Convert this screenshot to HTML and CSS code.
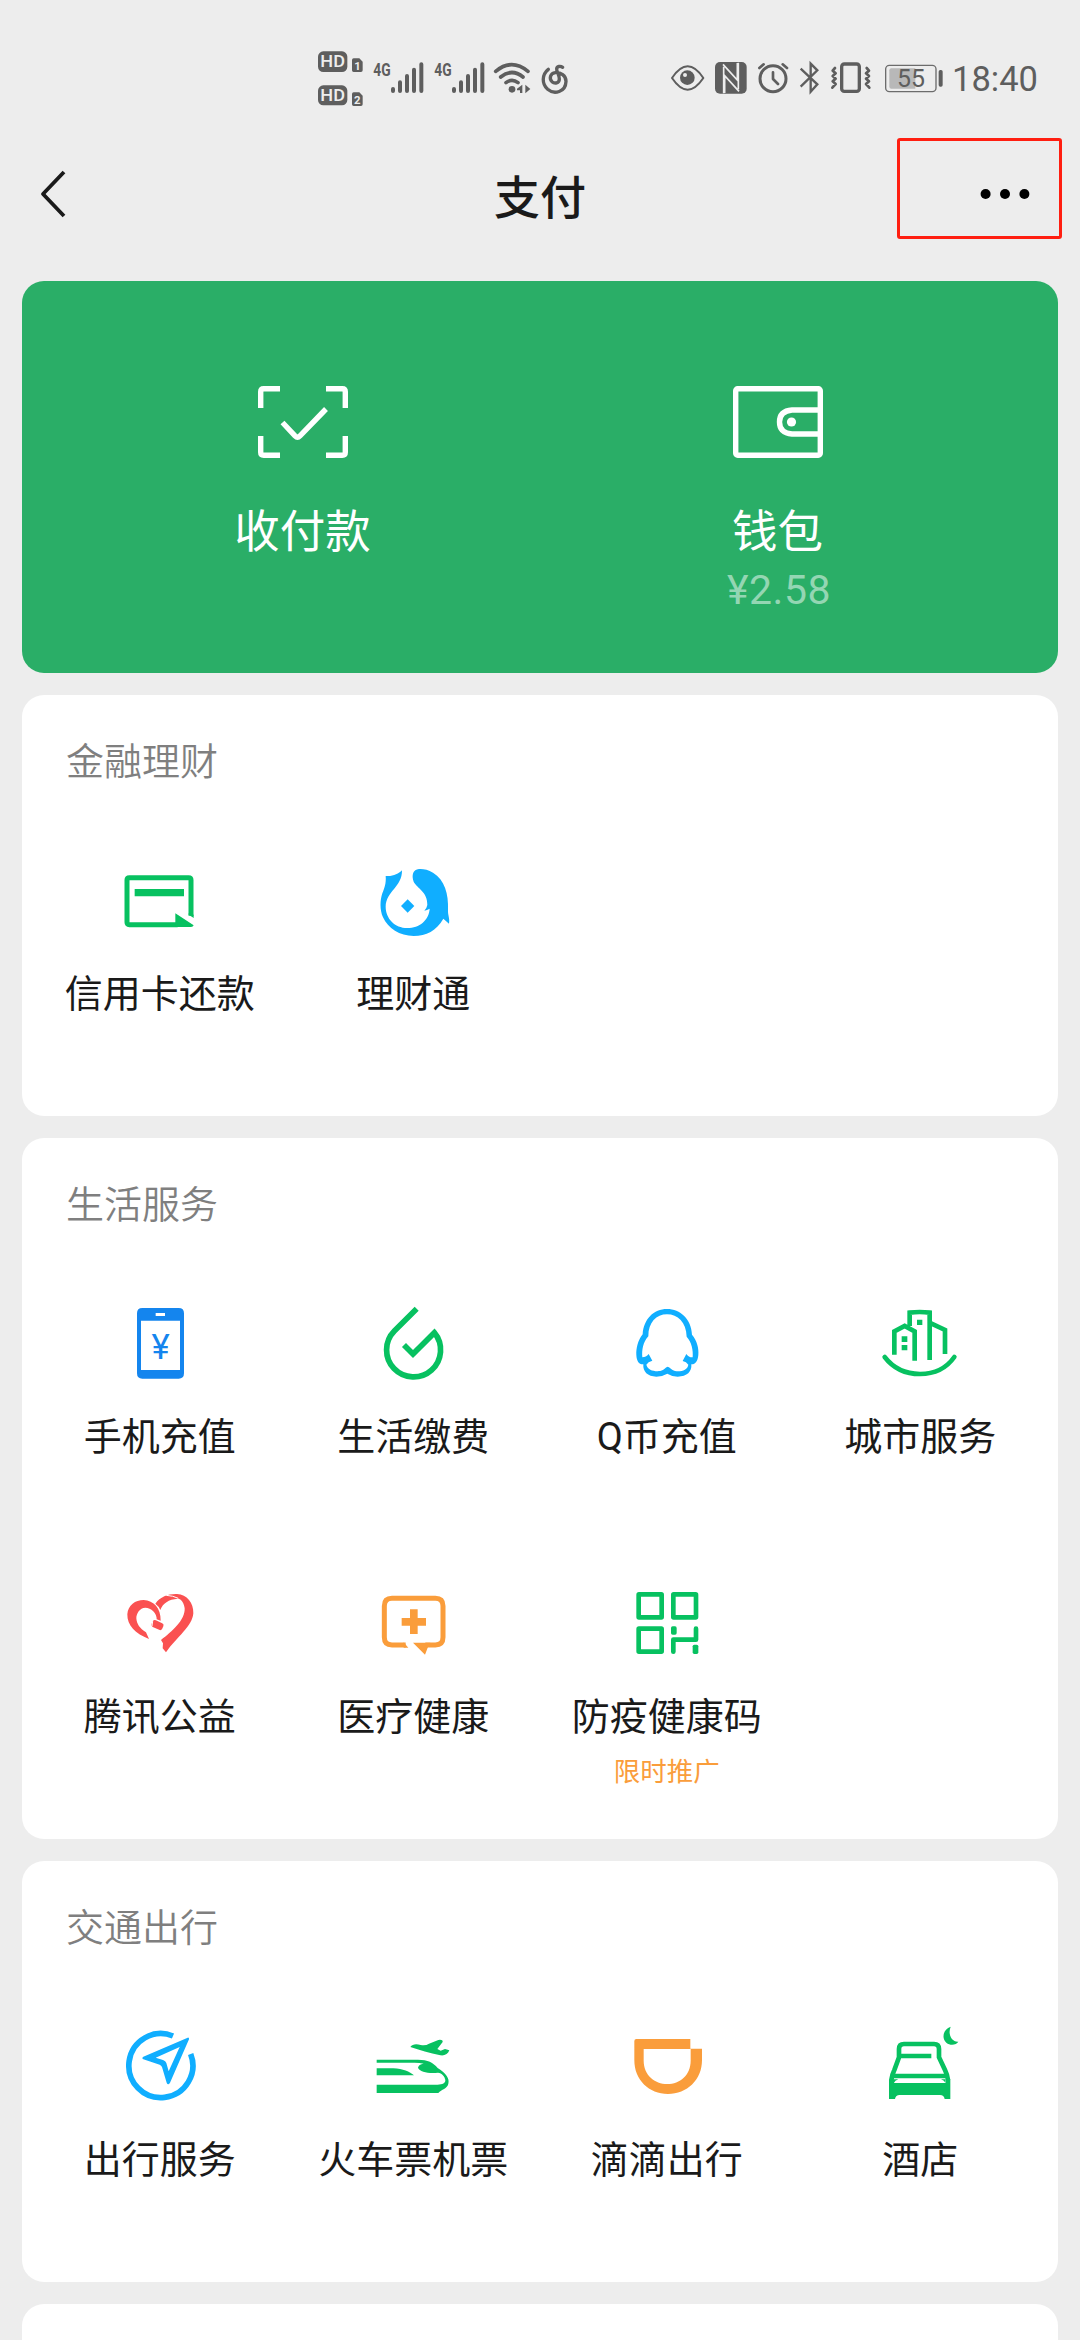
FILE: index.html
```html
<!DOCTYPE html>
<html lang="zh-CN">
<head>
<meta charset="utf-8">
<title>支付</title>
<link rel="stylesheet" href="styles.css">
</head>
<body>
<div class="status">
  <svg class="status-left" viewBox="0 0 870 270">
    <g class="fill">
      <rect x="54" y="64" width="88" height="62" rx="16"/>
      <rect x="54" y="166" width="88" height="60" rx="16"/>
      <path d="M156 90q0-5 5-5h17l10 10v26q0 5-5 5h-22q-5 0-5-5zM156 192q0-5 5-5h17l10 10v26q0 5-5 5h-22q-5 0-5-5z"/>
      <circle cx="636" cy="178" r="10"/>
      <path d="M667 164v25h-7v-8h-9v-5zM676 164l15 13-15 13z"/>
    </g>
    <text class="hd" x="61" y="112" textLength="74" lengthAdjust="spacingAndGlyphs">HD</text>
    <text class="hd" x="61" y="213" textLength="74" lengthAdjust="spacingAndGlyphs">HD</text>
    <text class="sim" x="163" y="121">1</text>
    <text class="sim" x="162" y="223">2</text>
    <text class="net" x="220" y="139" textLength="52" lengthAdjust="spacingAndGlyphs">4G</text>
    <text class="net" x="403" y="139" textLength="52" lengthAdjust="spacingAndGlyphs">4G</text>
    <path class="line w12" d="M279 177v6M300 157v26M321 138v45M342 119v64M364 103v80M462 177v6M483 157v26M504 138v45M525 119v64M547 103v80"/>
    <path class="line w11" d="M587 124q48-40 97 0M602 141q34-27 67 0M618 158q18-14 36 0"/>
    <path class="line w10" d="M745 118c-20 16-20 44-2 60 20 17 54 8 55-24 0-18-16-27-32-26-16 2-19 18-10 27 8 7 22 5 22-8 0-13-9-22-8-31 1-7 11-9 18-4"/>
  </svg>
  <svg class="status-right" viewBox="0 0 900 240">
    <path class="line w6" d="M66 114q47-70 94 0q-47 70-94 0z"/>
    <circle class="fill" cx="112" cy="113" r="22"/>
    <circle class="dot-bg" cx="105" cy="105" r="6"/>
    <rect class="fill" x="195" y="66" width="95" height="95" rx="15"/>
    <path class="cut" d="M221 160V80M219 73l43 47V69M265 68V148M267 154l-43-47v52"/>
    <circle class="line w9" cx="369" cy="116" r="39"/>
    <path class="line w8" d="M369 97v20l15 15M328 84l13-11M398 73l13 11"/>
    <path class="line w7 sharp" d="M452 86l50 47-20 22V71l20 20-50 49"/>
    <rect class="line w10" x="575" y="72" width="53" height="82" rx="8"/>
    <path class="line w8" d="M555 84l-7 8 9 8-9 8 9 8-9 8 9 8-10 11M650 84l7 8-9 8 9 8-9 8 9 8-9 8 10 11"/>
    <rect class="battery" x="707" y="76" width="151" height="79" rx="11"/>
    <path class="charge" d="M718 91q0-6 6-6h72v61h-72q-6 0-6-6z"/>
    <rect class="fill" x="866" y="90" width="12" height="50" rx="5"/>
    <text class="level" x="741" y="140" textLength="84" lengthAdjust="spacingAndGlyphs">55</text>
  </svg>
  <span class="clock">18:40</span>
</div>
<header class="nav">
  <svg class="back" viewBox="0 0 26 50"><path d="M24 3L3 25l21 22"/></svg>
  <h1 class="nav-title">支付</h1>
  <svg class="more" viewBox="0 0 50 12"><circle cx="5.6" cy="6" r="5"/><circle cx="25" cy="6" r="5"/><circle cx="44.4" cy="6" r="5"/></svg>
  <div class="marker"></div>
</header>
<main class="cards">
  <section class="hero">
    <div class="hero-item">
      <svg class="hero-icon" viewBox="0 0 90 72"><path d="M22 2.7H5.7q-3 0-3 3V22M68 2.7h16.300q3 0 3 3V22M22 69.300H5.700q-3 0-3-3V50M68 69.300h16.300q3 0 3-3V50"/><path d="M24.500 36.500L37 49.800q2.500 2.500 5 0L68 23"/></svg>
      <span class="hero-label">收付款</span>
    </div>
    <div class="hero-item">
      <svg class="hero-icon" viewBox="0 0 90 72"><rect x="2.700" y="2.700" width="84.600" height="66.600" rx="2"/><path d="M86 24H59q-12.500 1-12.500 12T59 48h27"/><circle class="solid" cx="58.500" cy="36" r="4.600"/></svg>
      <span class="hero-label">钱包</span>
      <span class="balance">¥2.58</span>
    </div>
  </section>

  <section class="card">
    <h2 class="card-title">金融理财</h2>
    <div class="grid">
      <div class="item green">
        <svg class="icon" viewBox="239 543 240 240"><path class="s15" d="M452 707V600q0-7-7-7H267q-7 0-7 7v127q0 7 7 7h145"/><path d="M405 700l55 36q-2 5-8 5h-47zM283 627h148v22H283zM445 700l15 4v10l-15-10z"/></svg>
        <span class="label">信用卡还款</span>
      </div>
      <div class="item blue">
        <svg class="icon" viewBox="1000 543 240 240"><path d="M1087 571C1076 582 1060 590 1038 588C1040 610 1034 625 1028 640C1021 660 1020 690 1030 712C1045 745 1080 768 1122 768C1160 768 1190 752 1211 716L1228 731C1231 715 1224 705 1225 690C1227 640 1215 600 1180 578C1165 569 1150 566 1138 567C1120 569 1115 585 1122 605C1132 625 1164 635 1163 675Q1161 686 1154 692Q1162 691 1170 686C1168 720 1140 744 1103 744C1065 744 1038 715 1038 680C1039 635 1088 620 1087 571z"/><path d="M1104 658l20 20-20 20-20-20z"/></svg>
        <span class="label">理财通</span>
      </div>
    </div>
  </section>

  <section class="card">
    <h2 class="card-title">生活服务</h2>
    <div class="grid">
      <div class="item azure">
        <svg class="icon" viewBox="179 102 240 240"><path fill-rule="evenodd" d="M246 114h109q16 0 16 16v180q0 16-16 16H246q-16 0-16-16V130q0-16 16-16zM242 152v148h117V152zM286 129v9h28v-9z"/><text class="yen" x="300.500" y="267">¥</text></svg>
        <span class="label">手机充值</span>
      </div>
      <div class="item green">
        <svg class="icon" viewBox="940 102 240 240"><path class="s17" d="M1071 116L1004 183A81 81 0 1 0 1124 188L1060 252L1033 225"/></svg>
        <span class="label">生活缴费</span>
      </div>
      <div class="item blue">
        <svg class="icon" viewBox="200 102 240 240"><path fill-rule="evenodd" d="M320 117C360 117 393 147 395 194C410 212 416 235 414 255C412 275 404 284 393 283C395 305 380 320 352 320Q333 319 321 311Q308 319 288 320C262 320 247 305 249 283C236 284 229 274 228 255C227 235 233 210 247 193C250 147 280 117 320 117zM320 133C288 133 264 157 264 199C248 217 244 240 246 262Q257 262 265 252L276 272Q263 275 258 284C262 300 280 305 300 303C312 300 318 290 322 290C326 290 334 300 344 303C362 306 382 300 384 284Q378 275 367 273L378 252Q386 263 397 262C399 240 394 217 379 200C378 157 352 133 320 133z"/></svg>
        <span class="label">Q币充值</span>
      </div>
      <div class="item green">
        <svg class="icon" viewBox="961 102 240 240"><path class="s14 round" d="M975 261Q1014 312 1081 312T1184 261"/><path class="s14" d="M1004 254V184L1035 168L1065 184V272M1050 168V128Q1080 124 1110 128V270M1114 160L1156 180V252"/><path d="M1026 199h17v17h-17zM1026 225h17v16h-17zM1072 149h16v16h-16z"/></svg>
        <span class="label">城市服务</span>
      </div>
      <div class="item red">
        <svg class="icon" viewBox="179 72 240 240"><path d="M266 237C225 222 200 195 201 163C203 135 225 120 250 120C280 121 302 145 301 182L289 178C290 160 272 143 255 143C238 144 228 160 228 175C229 192 238 205 257 217z"/><path d="M285 131C300 110 325 101 350 102C380 104 400 128 399 160C396 200 350 230 317 277L307 265L308 250L302 240C335 215 375 180 373 145C372 130 362 115 352 116C325 118 307 130 300 150Q295 138 285 131z"/><rect x="274" y="184" width="35" height="22" rx="7" transform="rotate(25 291 195)"/><path class="seam" d="M318 106q20 1 36 9M277 184l-2 14"/></svg>
        <span class="label">腾讯公益</span>
      </div>
      <div class="item orange">
        <svg class="icon" viewBox="940 72 240 240"><path class="s15" d="M1038 255H997q-23 0-23-23V138q0-23 23-23h130q23 0 23 23v94q0 23-23 23h-30"/><path d="M1032 247l14 16h-14zM1060 248h52l-8 15-8 21zM1051 148h23v26h25v23h-25v25h-23v-25h-25v-23h25z"/></svg>
        <span class="label">医疗健康</span>
      </div>
      <div class="item green">
        <svg class="icon" viewBox="200 72 240 240"><g class="s14"><rect x="235" y="103" width="69" height="69" rx="1"/><rect x="339" y="103" width="68" height="69" rx="1"/><rect x="235" y="206" width="69" height="69" rx="1"/></g><path class="s14 round" d="M407 206V239H339V275"/><rect x="332" y="199" width="17" height="25" rx="5"/><rect x="397" y="254" width="17" height="28" rx="5"/></svg>
        <span class="label">防疫健康码</span>
        <span class="promo">限时推广</span>
      </div>
    </div>
  </section>

  <section class="card">
    <h2 class="card-title">交通出行</h2>
    <div class="grid">
      <div class="item blue">
        <svg class="icon" viewBox="179 81 240 240"><path class="s17" d="M338 108A96 96 0 1 0 391 162"/><path fill-rule="evenodd" d="M382 113Q387 112 386 118L329 248Q323 257 319 248L305 201Q303 196 298 194L249 178Q243 174 249 170zM358 141L286 173L308 180Q316 183 318 189L325 214z"/></svg>
        <span class="label">出行服务</span>
      </div>
      <div class="item green">
        <svg class="icon" viewBox="940 81 240 240"><path d="M951 179H1075C1105 179 1120 187 1134 204C1160 220 1170 236 1166 251C1163 266 1145 268 1136 279H951V254H1130C1147 255 1158 249 1157 240C1155 228 1147 220 1135 218C1110 222 1080 216 1075 203Q1077 192 1092 191Q1080 188 1065 188H951z"/><path d="M951 205h50C1030 206 1050 215 1063 226H951zM1052 141C1058 132 1070 131 1083 135Q1098 138 1108 131L1136 120Q1150 118 1149 126L1133 147L1143 152L1156 147L1169 151C1165 162 1155 168 1142 166C1110 160 1080 150 1052 141z"/></svg>
        <span class="label">火车票机票</span>
      </div>
      <div class="item orange">
        <svg class="icon" viewBox="200 81 240 240"><path fill-rule="evenodd" d="M222 123q0-6 6-6h162v29h35v35C425 240 380 282 323 282S222 240 222 181zM250 147v35C250 225 283 252 321 252S391 225 391 182V147z"/></svg>
        <span class="label">滴滴出行</span>
      </div>
      <div class="item green">
        <svg class="icon" viewBox="961 81 240 240"><path class="s14" d="M995 240Q997 224 1004 210L1018 172V147Q1018 132 1033 132H1123Q1138 132 1138 147V172L1156 210Q1163 224 1165 240M1022 168H1115M1002 228H1158"/><path d="M988 238h15v11h154v-11h15v59h-17q-2-12-14-12H1020q-12 0-14 12h-18zM1002 250v-12h14q-10 3-14 12zM1158 250v-12h-14q10 3 14 12zM1173 80C1150 88 1145 115 1160 128C1172 138 1190 135 1196 125C1178 127 1163 105 1173 80z"/></svg>
        <span class="label">酒店</span>
      </div>
    </div>
  </section>
  <section class="card card-next"></section>
</main>
</body>
</html>
```
FILE: styles.css
```css
* { box-sizing: border-box; }
body {
  margin: 0;
  width: 1080px;
  height: 2340px;
  overflow: hidden;
  background: #ededed;
  color: #1a1a1a;
  font-family: Roboto, "Noto Sans CJK SC", sans-serif;
}
h1, h2 { margin: 0; font-weight: 400; }
svg { display: block; flex: none; }

/* status bar */
.status { display: flex; height: 130px; padding: 30px 44px 0 300px; color: #5e5e5e; }
.status-left { width: 290px; height: 90px; }
.status-right { width: 300px; height: 80px; margin: 10px 0 0 60px; }
.clock { margin: 29px 0 0 2px; font-size: 34.5px; line-height: 40px; white-space: nowrap; }
.fill { fill: #5e5e5e; }
.line { fill: none; stroke: #5e5e5e; stroke-linecap: round; stroke-linejoin: round; }
.sharp { stroke-linecap: butt; stroke-linejoin: miter; }
.w6 { stroke-width: 6; }
.w7 { stroke-width: 7; }
.w8 { stroke-width: 8; }
.w9 { stroke-width: 9; }
.w10 { stroke-width: 10; }
.w11 { stroke-width: 11; }
.w12 { stroke-width: 12; }
.hd { font: 500 49px Roboto, sans-serif; fill: #ededed; }
.sim { font: 700 34px Roboto, sans-serif; fill: #ededed; }
.net { font: 700 56px Roboto, sans-serif; fill: #5e5e5e; }
.level { font: 400 77px Roboto, sans-serif; fill: #5e5e5e; }
.dot-bg { fill: #ededed; }
.cut { fill: none; stroke: #ededed; stroke-width: 5; }
.battery { fill: none; stroke: #6c6c6c; stroke-width: 4; }
.charge { fill: #b8b8b8; }

/* navigation bar */
.nav {
  position: relative;
  display: flex;
  align-items: center;
  justify-content: space-between;
  height: 128px;
  padding: 0 50px 0 40px;
}
.back { width: 26px; height: 50px; }
.back path { fill: none; stroke: #1a1a1a; stroke-width: 3.8; stroke-linejoin: round; }
.nav-title { padding: 7px 0 0 34px; font-size: 46px; font-weight: 500; line-height: 60px; }
.more { width: 50px; height: 12px; }
.marker {
  position: absolute;
  left: 897px;
  top: 8px;
  width: 165px;
  height: 101px;
  border: 3px solid #ff1e10;
  border-radius: 3px;
}

/* cards */
.cards { display: flex; flex-direction: column; gap: 22px; padding: 23px 22px 0; }
.hero {
  display: flex;
  height: 392px;
  padding: 105px 43px 0;
  border-radius: 22px;
  background: #2aae67;
  color: #fff;
}
.hero-item { flex: 1; display: flex; flex-direction: column; align-items: center; }
.hero-icon { width: 90px; height: 72px; fill: none; stroke: #fff; stroke-width: 5.4; }
.hero-icon .solid { fill: #fff; stroke: none; }
.hero-label { margin-top: 45px; font-size: 45.5px; line-height: 60px; }
.balance { padding-left: 3px; font-size: 41px; line-height: 54px; letter-spacing: 0.5px; color: #94d6b3; }
.card { flex: none; border-radius: 22px; background: #fff; }
.card-next { height: 36px; border-radius: 22px 22px 0 0; }
.card-title { height: 141px; padding: 40px 44px 0; font-size: 38px; line-height: 54px; font-weight: 350; color: #7f7f7f; }
.grid { display: grid; grid-template-columns: repeat(4, 1fr); grid-auto-rows: 280px; padding: 0 11px; }
.item { display: flex; flex-direction: column; align-items: center; padding-top: 25px; }
.icon { width: 80px; height: 80px; fill: currentColor; overflow: visible; }
.label { margin-top: 26px; font-size: 38px; line-height: 54px; color: #1a1a1a; white-space: nowrap; }
.promo { margin-top: 9px; font-size: 26.5px; line-height: 38px; color: #fa9d3b; }
.green { color: #07c160; }
.blue { color: #10aeff; }
.azure { color: #1485ee; }
.red { color: #fa5151; }
.orange { color: #fa9d3b; }
.s14, .s15, .s17 { fill: none; stroke: currentColor; }
.s14 { stroke-width: 14; }
.s15 { stroke-width: 15; }
.s17 { stroke-width: 17; }
.round { stroke-linecap: round; stroke-linejoin: round; }
.seam { fill: none; stroke: #fff; stroke-width: 3; }
.yen { font: 400 104px Roboto, sans-serif; text-anchor: middle; }
```
